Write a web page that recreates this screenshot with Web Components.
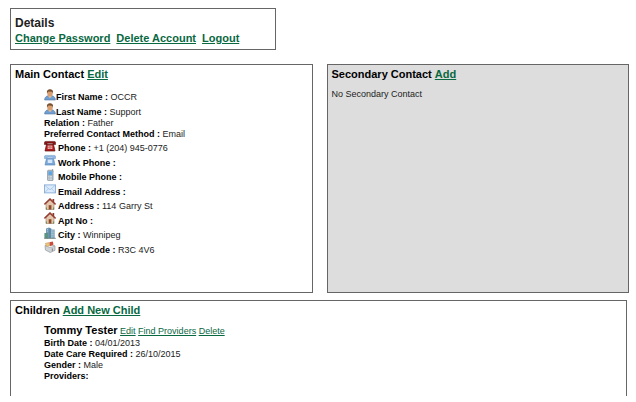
<!DOCTYPE html>
<html lang="en">
<head>
<meta charset="utf-8">
<title>Details</title>
<style>
    body {
        margin: 0;
        background: #fff;
        color: #222;
        font-family: "Liberation Sans", Arial, sans-serif;
        font-size: 9px;
    }
</style>
</head>
<body>
<account-page></account-page>

<script>
const icons = {
    person: `
        <path d="M.6 11c0-3 2-4.500 5.400-4.500s5.400 1.500 5.400 4.500z" fill="#6f9fd0" stroke="#5077a8" stroke-width=".6"/>
        <path d="M4.500 6h3v2L6 9 4.500 8z" fill="#e9b98c"/>
        <ellipse cx="6" cy="4" rx="2.800" ry="3.300" fill="#d99f70"/>
        <path d="M3 4.200C2.400 1.500 4 .2 6 .2s3.600 1.300 3 4L8 2.700 4.500 2.500z" fill="#76502f"/>`,
    phone: `
        <path d="M2.500 4.500h7l1.500 6.500H1z" fill="#b01c1c" stroke="#5e0c0c" stroke-width=".7"/>
        <path d="M.4 4.500V2.600Q.4 1.400 2 1.400h8q1.600 0 1.600 1.200v1.900H8.800V3.300H3.200v1.200z" fill="#8d1212" stroke="#4b0808" stroke-width=".5"/>
        <rect x="3.700" y="5.600" width="4.600" height="3.400" fill="#f3cbc5"/>
        <path d="M3.700 7.200h4.600M5.200 5.600V9M6.800 5.600V9" stroke="#a33" stroke-width=".5"/>`,
    work: `
        <path d="M2.500 4.500h7l1.500 6.500H1z" fill="#79a6d6" stroke="#5f8dc2" stroke-width=".7"/>
        <path d="M.4 4.500V2.600Q.4 1.400 2 1.400h8q1.600 0 1.600 1.200v1.900H8.800V3.300H3.200v1.200z" fill="#91b8e0" stroke="#6d99cb" stroke-width=".5"/>
        <rect x="3.700" y="5.600" width="4.600" height="3.400" fill="#d5e7f8"/>`,
    mobile: `
        <path d="M8.700.2V3" stroke="#7f8b96"/>
        <rect x="3.500" y="1.200" width="5.600" height="10.500" rx="1" fill="#a9b5bf" stroke="#7d8993" stroke-width=".6"/>
        <rect x="4.500" y="2.400" width="3.600" height="3.600" fill="#5ba7e6"/>
        <path d="M4.500 7.500h3.600M4.500 9h3.600M4.500 10.400h3.600" stroke="#edf2f5" stroke-width=".8" stroke-dasharray=".8 .6"/>`,
    mail: `
        <rect x=".4" y="1.900" width="11.200" height="8" fill="#dcebfb" stroke="#7ba3d3" stroke-width=".8"/>
        <path d="M.8 2.300 6 6.800l5.200-4.500M.8 9.600l3.700-4M11.200 9.600l-3.700-4" fill="none" stroke="#9abbe0" stroke-width=".7"/>`,
    house: `
        <path d="M8.500 1h1.700v3H8.500z" fill="#8c3c2f"/>
        <path d="M2 5.500 6 2l4 3.500v6H2z" fill="#e3c6ab" stroke="#8e6f59" stroke-width=".5"/>
        <path d="M.4 6.500 6 1l5.600 5.500" fill="none" stroke="#963d32" stroke-width="1.500"/>
        <path d="M4.700 7.200h2.700v4.300H4.700z" fill="#8f4a2e"/>
        <path d="M2.400 9.500v2M9.600 9.500v2" stroke="#66904c"/>`,
    city: `
        <path d="M2 1.500 5 .5v10.800H2z" fill="#7198b7"/>
        <path d="m5 .5 2.500 1.300v9.500H5z" fill="#5f8aa6"/>
        <path d="M7.500 2.500h3.300v8.800H7.500z" fill="#83a6bd"/>
        <path d="M.4 6h3.800v5.400H.4z" fill="#5d9384"/>
        <path d="M8.300 3.500v7M10 3.500v7M3.500 2v3.500" stroke="#c5dde9" stroke-width=".7" stroke-dasharray="1 .7"/>
        <path d="M.2 11.300h11.600" stroke="#6a7e76" stroke-width=".9"/>`,
    postal: `
        <path d="M1 4.500 6 3l5 2v4.300L6.300 11.600 1.400 9z" fill="#cfd2d5" stroke="#85898e" stroke-width=".6"/>
        <path d="m1 4.500 5 2.200L11 5" fill="#f3f4f5" stroke="#9da2a7" stroke-width=".6"/>
        <path d="M5.300 1.200 8.800.6l.7 3-3.300 1.600z" fill="#cc4a3b"/>
        <path d="M1.300 2.300 4.800 1.600l1 3.200-3.300.6z" fill="#f0c678" stroke="#a98752" stroke-width=".4"/>
        <path d="M8.300 7.500v2.400" stroke="#6e7479" stroke-width=".9"/>`
};

function define(name, html, setup) {
    const template = document.createElement("template");
    template.innerHTML = html;

    customElements.define(name, class extends HTMLElement {
        constructor() {
            super();
            this.attachShadow({mode: "open"});
            this.shadowRoot.append(template.content.cloneNode(true));
        }

        connectedCallback() {
            if (setup) setup(this, this.shadowRoot);
        }
    });
}

define("field-icon", `
<style>
    :host {
        display: block;
        width: 12px;
        height: 12px;
        white-space: normal;
    }
    svg {
        display: block;
    }
</style>
<svg width="12" height="12" viewBox="0 0 12 12" aria-hidden="true"></svg>
`, (host, root) => {
    root.querySelector("svg").innerHTML = icons[host.getAttribute("name")];
});

// bordered box with a heading, its links and any content
define("info-panel", `
<style>
    :host {
        display: block;
        box-sizing: border-box;
        border: 1px solid #666;
        padding: 3px 4px;
    }
    header {
        color: #000;
        font-size: 11px;
        line-height: 13px;
    }
</style>
<header><slot name="heading"></slot></header>
<slot></slot>
`);

define("detail-field", `
<style>
    :host {
        display: flex;
        align-items: flex-end;
        height: 11px;
        line-height: 11px;
        white-space: pre;
    }
    :host([icon]) {
        height: 14px;
    }
    field-icon {
        margin-right: 2px;
        align-self: flex-start;
    }
    :host([icon="person"]) field-icon {
        margin-right: 0;
    }
    b {
        color: #000;
    }
</style>
<b></b><span> <slot></slot></span>
`, (host, root) => {
    root.querySelector("b").textContent = host.getAttribute("label");
    if (host.hasAttribute("icon")) {
        const icon = document.createElement("field-icon");
        icon.setAttribute("name", host.getAttribute("icon"));
        root.querySelector("b").before(icon);
    }
});

define("account-page", `
<style>
    :host {
        display: block;
        padding: 8px 7px 6px 10px;
    }
    h1, h2, h3, p {
        margin: 0;
        font-size: inherit;
    }
    h2, h3 {
        display: inline;
    }
    a {
        color: #08683f;
    }
    .account {
        width: 43%;
        padding: 6px 4px 3px;
        margin-bottom: 14px;
    }
    h1 {
        color: #222;
        font-size: 12px;
        line-height: 16px;
    }
    nav {
        display: flex;
        gap: 6px;
        line-height: 15px;
        font-weight: bold;
    }
    .heading a {
        font-weight: bold;
    }
    .contacts {
        display: grid;
        grid-template-columns: 1fr 1fr;
        gap: 14px;
        margin-bottom: 7px;
    }
    .contacts info-panel {
        min-height: 229px;
    }
    .secondary {
        background: #ddd;
    }
    p {
        margin-top: 8px;
        line-height: 11px;
    }
    .fields {
        padding: 8px 0 0 29px;
    }
    .fields detail-field[icon]:nth-child(even) {
        height: 15px;
    }
    .children {
        min-height: 96px;
        margin-right: 2px;
        border-bottom: 0;
    }
    .child {
        padding: 6px 0 0 29px;
    }
    .name {
        line-height: 14px;
    }
    h3 {
        color: #000;
        font-size: 11px;
    }
</style>
<info-panel class="account">
    <div slot="heading">
        <h1>Details</h1>
        <nav>
            <a href="#password">Change Password</a>
            <a href="#delete">Delete Account</a>
            <a href="#logout">Logout</a>
        </nav>
    </div>
</info-panel>
<div class="contacts">
    <info-panel>
        <div slot="heading" class="heading"><h2>Main Contact</h2> <a href="#edit">Edit</a></div>
        <div class="fields">
            <detail-field icon="person" label="First Name :">OCCR</detail-field>
            <detail-field icon="person" label="Last Name :">Support</detail-field>
            <detail-field label="Relation :">Father</detail-field>
            <detail-field label="Preferred Contact Method :">Email</detail-field>
            <detail-field icon="phone" label="Phone :">+1 (204) 945-0776</detail-field>
            <detail-field icon="work" label="Work Phone :"></detail-field>
            <detail-field icon="mobile" label="Mobile Phone :"></detail-field>
            <detail-field icon="mail" label="Email Address :"></detail-field>
            <detail-field icon="house" label="Address :">114 Garry St</detail-field>
            <detail-field icon="house" label="Apt No :"></detail-field>
            <detail-field icon="city" label="City :">Winnipeg</detail-field>
            <detail-field icon="postal" label="Postal Code :">R3C 4V6</detail-field>
        </div>
    </info-panel>
    <info-panel class="secondary">
        <div slot="heading" class="heading"><h2>Secondary Contact</h2> <a href="#add">Add</a></div>
        <p>No Secondary Contact</p>
    </info-panel>
</div>
<info-panel class="children">
    <div slot="heading" class="heading"><h2>Children</h2> <a href="#add-child">Add New Child</a></div>
    <div class="child">
        <div class="name">
            <h3>Tommy Tester</h3>
            <a href="#edit-child">Edit</a>
            <a href="#providers">Find Providers</a>
            <a href="#delete-child">Delete</a>
        </div>
        <detail-field label="Birth Date :">04/01/2013</detail-field>
        <detail-field label="Date Care Required :">26/10/2015</detail-field>
        <detail-field label="Gender :">Male</detail-field>
        <detail-field label="Providers:"></detail-field>
    </div>
</info-panel>
`);
</script>
</body>
</html>
